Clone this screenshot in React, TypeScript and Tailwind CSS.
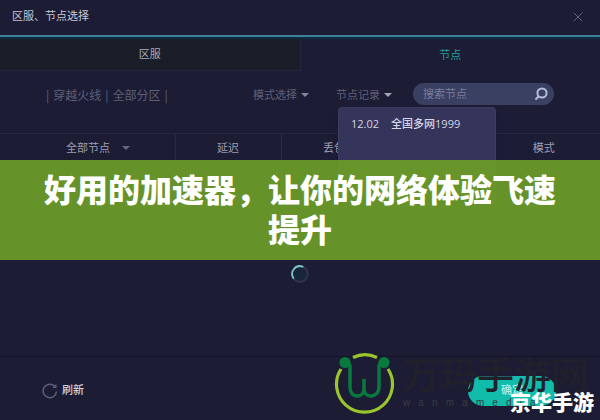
import { X } from "lucide-react";

const columns = [
  { label: "延迟", width: "w-[106px]" },
  { label: "丢包", width: "w-[106px]" },
  { label: "速度", width: "w-[100px]" },
];

function Caret({ className }: { className: string }) {
  return (
    <svg className={`h-1 w-2 ${className}`} viewBox="0 0 8 4" fill="currentColor" aria-hidden="true">
      <path d="M0 0h8L4 4z" />
    </svg>
  );
}

function Header() {
  return (
    <header className="flex h-[39px] items-center justify-between border-b-2 border-[#0b2c42] bg-[#1c1d35] shadow-[inset_0_-2px_0_#417f99]">
      <h1 className="pb-1 pl-3 text-[11px] text-[#c5c6d4]">区服、节点选择</h1>
      <button type="button" aria-label="关闭" className="mr-[14px] mb-1 text-[#62637a]">
        <X className="h-4 w-4" strokeWidth={1.5} />
      </button>
    </header>
  );
}

function Tabs() {
  return (
    <nav className="flex h-8 text-[11px]">
      <button type="button" className="flex-1 border-r border-b border-[#24253d] bg-[#191e28] text-[#a9abb9]">
        区服
      </button>
      <button type="button" className="flex-1 text-[#259c98]">
        节点
      </button>
    </nav>
  );
}

function Filters() {
  return (
    <div className="flex h-[62px] items-start pt-3 text-[11px] text-[#5e5f78]">
      <p className="flex h-6 flex-1 items-center gap-1 pl-[46px] font-['Noto_Sans_CJK_SC',sans-serif] text-xs">
        <span>|</span>
        <span>穿越火线</span>
        <span>|</span>
        <span>全部分区</span>
        <span>|</span>
      </p>
      <button type="button" className="flex h-6 items-center gap-1">
        模式选择
        <Caret className="text-[#85869d]" />
      </button>
      <div className="relative ml-[27px]">
        <button type="button" className="flex h-6 items-center gap-1">
          节点记录
          <Caret className="text-[#a5a6bb]" />
        </button>
        <div className="absolute top-6 left-[2px] z-10 h-[93px] w-[158px] rounded-sm border border-[#3d3c60] bg-[#35345a] px-3 pt-2 text-[11px] text-[#d6d6e4] shadow-lg">
          <button type="button" className="flex items-center gap-3 font-medium whitespace-nowrap">
            <span>12.02</span>
            <span>全国多网1999</span>
          </button>
        </div>
      </div>
      <label className="mr-[46px] ml-[21px] flex h-[22px] w-[141px] items-center rounded-full bg-[#3a4062] pr-1.5 pl-2.5">
        <input
          type="text"
          aria-label="搜索节点"
          placeholder="搜索节点"
          className="w-full min-w-0 bg-transparent text-[11px] outline-none placeholder:text-[#797e9c]"
        />
        <svg className="h-3.5 w-3.5 shrink-0 text-[#b5bfdc]" viewBox="0 0 14 14" fill="none" stroke="currentColor" strokeWidth="2">
          <circle cx="8" cy="6" r="4.6" />
          <path d="M4.5 9.5 1.5 12.5" />
        </svg>
      </label>
    </div>
  );
}

function NodeTable() {
  return (
    <table className="w-full table-fixed border-t border-[#28293f] text-[11px] text-[#9c9daf]">
      <thead>
        <tr className="h-7">
          <th className="w-[175px] border-r border-[#292a42] pl-[66px] text-left font-normal">
            <button type="button" className="flex items-center gap-3">
              全部节点
              <Caret className="text-[#66677d]" />
            </button>
          </th>
          {columns.map((column) => (
            <th key={column.label} className={`border-r border-[#292a42] font-normal ${column.width}`}>
              {column.label}
            </th>
          ))}
          <th className="font-normal">模式</th>
        </tr>
      </thead>
    </table>
  );
}

function Banner() {
  return (
    <section className="absolute inset-x-0 top-[160px] z-20 bg-[#6a9a28]/94 px-10 py-2.5">
      <h2 className="text-center text-[32px] leading-10 font-black text-white">
        好用的加速器，让你的网络体验飞速提升
      </h2>
    </section>
  );
}

function Spinner() {
  return (
    <svg className="h-[18px] w-[18px]" viewBox="0 0 18 18" fill="none" strokeWidth="1.8" role="status" aria-label="加载中">
      <circle cx="9" cy="9" r="7.8" stroke="#34354a" fill="#18263c" />
      <path d="M2.3 13A7.8 7.8 0 0 1 11.6 1.6" stroke="#7cc5c9" strokeLinecap="round" />
    </svg>
  );
}

function Watermark() {
  return (
    <div className="pointer-events-none absolute right-2.5 bottom-1.5 z-20 flex items-center gap-2 text-[#20212a]">
      <svg className="h-[62px] w-[62px]" viewBox="0 0 62 62" fill="none">
        <path d="M20 5.5a28 28 0 0 1 24 0M55 17a28 28 0 1 1-47 0" stroke="#9bc62b" strokeWidth="3.2" />
        <path
          d="M12 11h2c2 0 3 1 3 4v20c0 6 3 9 7 9s7-3 7-7V27v10c0 4 3 7 7 7s8-3 8-9V15c0-3 1-4 3-4h2"
          stroke="#087a3d"
          strokeWidth="3.5"
        />
        <circle cx="12" cy="10.5" r="5.5" fill="#087a3d" />
        <circle cx="51" cy="10.5" r="5.5" fill="#087a3d" />
      </svg>
      <div className="w-[187px]">
        <p className="text-[37px] leading-10 font-medium whitespace-nowrap">万玛手游网</p>
        <p className="flex justify-between font-['Liberation_Sans',sans-serif] text-[10px] leading-4 text-[#3a3b43]">
          {"wanmamedia.com".split("").map((letter, index) => (
            <span key={index}>{letter}</span>
          ))}
        </p>
      </div>
    </div>
  );
}

function Footer() {
  return (
    <footer className="flex h-16 items-center justify-between border-t border-[#121329] pr-11 pl-[42px]">
      <button type="button" className="flex items-center gap-1 pt-1 text-[11px] font-medium text-[#cfd0dc]">
        <svg className="h-4 w-4" viewBox="0 0 16 16" fill="none" stroke="#5d5e76" strokeWidth="1.5">
          <path d="M14.5 8.5A6.7 6.7 0 1 1 12.8 3.5" />
          <path d="M11 4.2h2.8V1.5" />
        </svg>
        刷新
      </button>
      <button type="button" className="mt-1 h-[30px] w-[88px] rounded-full bg-[#12bcab] text-[11px] font-medium text-[#b9ece7]">
        确定
      </button>
    </footer>
  );
}

export default function App() {
  return (
    <main
      lang="zh-CN"
      className="relative flex min-h-screen flex-col bg-[#1c1d35] font-['Open_Sans','Noto_Sans_CJK_SC',sans-serif]"
    >
      <Header />
      <Tabs />
      <Filters />
      <NodeTable />
      <Banner />
      <div className="flex flex-1 items-end justify-center pb-[73px]">
        <Spinner />
      </div>
      <Footer />
      <Watermark />
      <p className="absolute right-1.5 bottom-1.5 z-30 text-[21px] leading-6 font-black text-white">京华手游</p>
    </main>
  );
}
